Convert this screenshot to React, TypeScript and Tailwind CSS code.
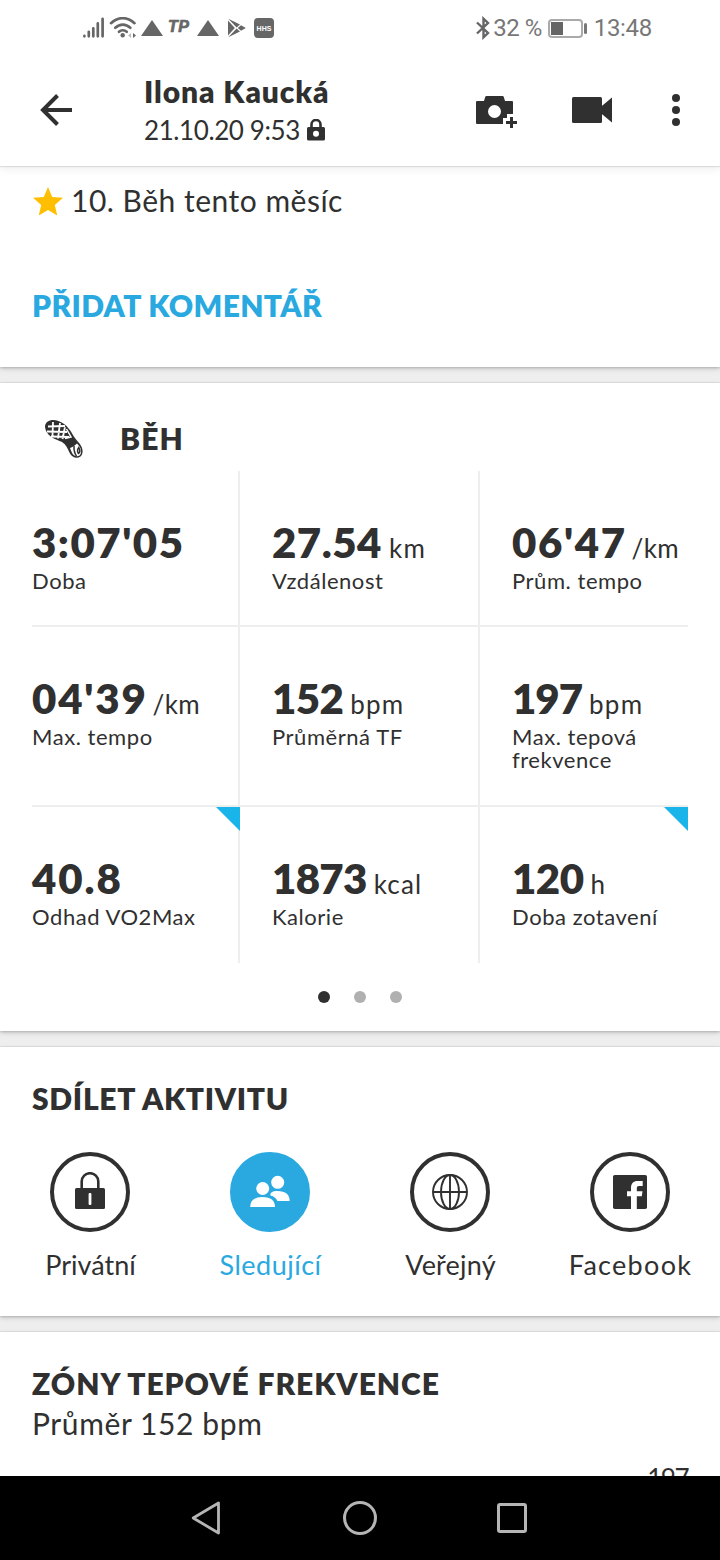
import { ReactNode } from "react"
import clsx from "clsx"

interface Metric {
  value: string
  unit?: string
  label: string
  flagged?: boolean
  spacing: string
}

const metrics: Metric[] = [
  { value: "3:07'05", label: "Doba", spacing: "tracking-[1.5px]" },
  { value: "27.54", unit: "km", label: "Vzdálenost", spacing: "tracking-[0.5px]" },
  { value: "06'47", unit: "/km", label: "Prům. tempo", spacing: "tracking-[1.6px]" },
  { value: "04'39", unit: "/km", label: "Max. tempo", spacing: "tracking-[1.8px]" },
  { value: "152", unit: "bpm", label: "Průměrná TF", spacing: "tracking-[-0.6px]" },
  { value: "197", unit: "bpm", label: "Max. tepová frekvence", spacing: "tracking-[-1px]" },
  { value: "40.8", label: "Odhad VO2Max", flagged: true, spacing: "tracking-[1.9px]" },
  { value: "1873", unit: "kcal", label: "Kalorie", spacing: "tracking-[-0.7px]" },
  { value: "120", unit: "h", label: "Doba zotavení", flagged: true, spacing: "tracking-[-0.5px]" },
]

function WarningTriangle({ className }: { className: string }) {
  return (
    <svg width="22" height="16" viewBox="0 0 22 16" fill="currentColor" className={className}>
      <path d="M11 0 22 16H0z" />
    </svg>
  )
}

function StatusBar() {
  return (
    <div className="flex h-14 items-center justify-between pl-[82px] pr-[68px] text-[#666]">
      <div className="flex items-center">
        <svg width="24" height="22" viewBox="0 0 24 22" stroke="currentColor" strokeWidth="2.7" strokeLinecap="round">
          <path d="M2.4 19.3v-.4M6.8 19.3v-4.5M11.3 19.3v-8M15.8 19.3V6.4M20.6 19.3V1.8" />
        </svg>
        <svg width="28" height="22" viewBox="0 0 28 22" className="ml-[3px]" fill="none" stroke="currentColor">
          <path
            d="M2 6.2C9-.6 18.5-.6 25.5 6.2M6.3 10.8c4.5-4.2 10.5-4.2 15 0M10 14.8c2.2-2 5.5-2 7.7 0"
            strokeWidth="2.6"
            strokeLinecap="round"
          />
          <circle cx="13.7" cy="18.3" r="2.2" fill="currentColor" stroke="none" />
          <path d="M24 16v5l3-2.5z" fill="currentColor" stroke="none" />
          <path d="M22 16v5l-3-2.5z" fill="#bbb" stroke="none" />
        </svg>
        <WarningTriangle className="ml-1" />
        <span className="ml-[5px] flex w-6 items-center pb-[2px] font-['Liberation_Sans'] text-[16px] font-bold italic leading-none tracking-[0.6px] [-webkit-text-stroke:0.7px]">
          TP
        </span>
        <WarningTriangle className="ml-[5px]" />
        <svg width="18" height="20" viewBox="0 0 18 20" fill="currentColor" className="ml-[9px]">
          <path d="M0 2.5 6.8 10 0 17.5zM.3.8 12 6.6 8.6 9.4zM.3 19.2 12 13.4 8.6 10.6zM13 7.3 17.8 10 13 12.7 9.8 10z" />
        </svg>
        <div className="ml-2 flex h-5 w-5 items-center justify-center rounded-[4px] bg-[#666] font-['Liberation_Sans'] text-[7px] font-bold leading-none text-white">
          HHS
        </div>
      </div>
      <div className="flex items-center font-[Roboto] text-[24px] leading-none text-[#777]">
        <svg width="14" height="24" viewBox="0 0 14 24" fill="none" stroke="#666" strokeWidth="2.4">
          <path d="M1 6.5 12 17 7.5 21.3V2.7L12 7 1 17.5" />
        </svg>
        <span className="ml-[3px] tracking-[-0.5px]">32 %</span>
        <div className="ml-[6px] flex h-[19px] w-[35px] items-center rounded-[4px] border-2 border-[#aaa] pl-px">
          <div className="h-[13px] w-3 bg-[#666]" />
        </div>
        <div className="ml-[1px] mr-[7px] h-[11px] w-[3px] rounded-sm bg-[#777]" />
        <span className="tracking-[-0.3px]">13:48</span>
      </div>
    </div>
  )
}

function Header() {
  return (
    <header className="relative z-10 flex h-[110px] items-center bg-white pb-[2px] pl-10 shadow-[0_1px_1px_rgba(0,0,0,0.1),0_4px_8px_rgba(0,0,0,0.06)] [clip-path:inset(0_0_-14px_0)]">
      <svg width="32" height="32" viewBox="0 0 32 32" fill="none" stroke="currentColor" strokeWidth="4">
        <path d="M32 16H3M17.5 1.5 3 16l14.5 14.5" />
      </svg>
      <div className="ml-[72px] w-[332px]">
        <div className="text-[30px] font-extrabold leading-9 tracking-[0.9px]">Ilona Kaucká</div>
        <div className="mt-[3px] flex items-center text-[26px] leading-9">
          <span className="tracking-[-0.4px]">21.10.20 9:53</span>
          <svg width="18" height="22" viewBox="0 0 18 22" className="ml-[7px]">
            <path d="M4.5 9V5.5a4.5 4.5 0 0 1 9 0V9" fill="none" stroke="currentColor" strokeWidth="2.6" />
            <rect y="8" width="18" height="13.5" rx="1.5" fill="currentColor" />
            <circle cx="9" cy="14.7" r="3" fill="white" />
          </svg>
        </div>
      </div>
      <svg width="42" height="34" viewBox="0 0 42 34" fill="currentColor" className="mt-[5px]">
        <path
          fillRule="evenodd"
          d="M10.5 0h16q1 0 1.3 1L29 5h7q1 0 1 1v12h-6v4h-4v6H1q-1 0-1-1V6q0-1 1-1h7l1.200-4Q9.500 0 10.500 0zM18.500 9a6.500 6.500 0 1 0 0 13 6.500 6.500 0 0 0 0-13z"
        />
        <path d="M34 21h3v4h4v3h-4v4h-3v-4h-4v-3h4z" />
      </svg>
      <svg width="40" height="26" viewBox="0 0 40 26" fill="currentColor" className="ml-[54px]">
        <rect width="30" height="26" rx="1.5" />
        <path d="M28 10.5 40 .5v25L28 15.500z" />
      </svg>
      <svg width="8" height="32" viewBox="0 0 8 32" fill="currentColor" className="ml-[60px]">
        <circle cx="4" cy="4" r="4" />
        <circle cx="4" cy="16" r="4" />
        <circle cx="4" cy="28" r="4" />
      </svg>
    </header>
  )
}

function Card({ children, className }: { children: ReactNode; className?: string }) {
  return (
    <section
      className={clsx(
        "shrink-0 bg-white shadow-[0_-1px_0_rgba(0,0,0,0.05),0_1px_2px_rgba(0,0,0,0.16),0_2px_5px_rgba(0,0,0,0.14)]",
        className
      )}
    >
      {children}
    </section>
  )
}

function ShoeSole() {
  return (
    <svg width="40" height="40" viewBox="0 0 40 40" className="ml-3 mt-[2px]">
      <path
        d="M1 8C1 3 5 .8 10 1c8 .8 14 6.5 17.5 12.5 2.5 4.5 5 7.5 8 11 4 5 4 10.5 1 13-3.5 2.5-8.5 1-10.5-3-2.5-5-3.5-8.5-8-11.500C10 20 2 16.500 1 8z"
        fill="currentColor"
      />
      <path
        d="M4 7.500 21 7M3 12.500l20 .5M7 17.500l18 .5M9 3 8.500 17M16 4 14 19.500M21 8 18.500 20"
        fill="none"
        stroke="white"
        strokeWidth="1.8"
      />
      <path d="M22.500 10l4.500 8-6 1.500" fill="none" stroke="white" strokeWidth="1.500" />
      <path
        d="M26 29c2.500-1 4.500-2.500 7-4.500 4 4 5.500 8.500 2.800 11.800-2.300 1.700-5.800 1-7.300-1.500-1-1.800-1.800-3.800-2.500-5.800z"
        fill="white"
      />
      <path
        d="M30 27c-.2 4 .3 7 2.500 10M34.800 28.500c1.300 2.500 1.200 5-.3 6-1.200-1.700-1.200-4 .3-6z"
        fill="none"
        stroke="currentColor"
        strokeWidth="1.500"
      />
    </svg>
  )
}

function MetricCell({ metric, index }: { metric: Metric; index: number }) {
  return (
    <div
      className={clsx(
        "relative border-[#eee] pt-[45px]",
        index % 3 !== 0 && "pl-8",
        index % 3 !== 2 && "border-r-2",
        index < 6 && "border-b-2"
      )}
    >
      {metric.flagged && (
        <svg
          width="24"
          height="24"
          viewBox="0 0 24 24"
          className={clsx("absolute top-0", index % 3 === 2 ? "right-0" : "-right-0.5")}
        >
          <path d="M0 0h24v24z" fill="#19b4ea" />
        </svg>
      )}
      <div className="flex h-[53px] items-baseline whitespace-nowrap leading-[53px]">
        <span className={clsx("text-[42px] font-extrabold", metric.spacing)}>{metric.value}</span>
        {metric.unit && (
          <span
            className={clsx("text-[26px]", metric.unit === "/km" ? "ml-[5px] tracking-[0.3px]" : "ml-[7px] tracking-[1.2px]")}
          >
            {metric.unit}
          </span>
        )}
      </div>
      <div className="text-[22px] leading-[23px] tracking-[0.55px]">{metric.label}</div>
    </div>
  )
}

function ActivityCard() {
  return (
    <Card className="h-[648px] px-8 pt-[35px]">
      <div className="flex h-10 items-center">
        <ShoeSole />
        <h2 className="ml-9 text-[30px] font-extrabold leading-10 tracking-[1.1px]">BĚH</h2>
      </div>
      <div className="mt-[13px] grid grid-cols-[208px_240px_208px] grid-rows-[156px_180px_156px]">
        {metrics.map((metric, i) => (
          <MetricCell key={metric.label} metric={metric} index={i} />
        ))}
      </div>
      <div className="mt-7 flex justify-center gap-6">
        <span className="h-3 w-3 rounded-full bg-[#303030]" />
        <span className="h-3 w-3 rounded-full bg-[#b0b0b0]" />
        <span className="h-3 w-3 rounded-full bg-[#b0b0b0]" />
      </div>
    </Card>
  )
}

function ShareOption({
  label,
  active,
  spacing,
  children,
}: {
  label: string
  active?: boolean
  spacing: string
  children: ReactNode
}) {
  return (
    <div className="flex flex-col items-center">
      <div
        className={clsx(
          "flex h-20 w-20 items-center justify-center rounded-full border-4",
          active ? "border-[#2aa9e0] bg-[#2aa9e0] text-white" : "border-[#303030]"
        )}
      >
        <svg width="40" height="40" viewBox="0 0 40 40" fill="currentColor">
          {children}
        </svg>
      </div>
      <div className={clsx("mt-[13px] pl-px text-[27px] leading-10", spacing, active && "text-[#2aa9e0]")}>{label}</div>
    </div>
  )
}

function ShareCard() {
  return (
    <Card className="mt-4 h-[269px] pt-[31px]">
      <h2 className="px-8 text-[30px] font-extrabold leading-10 tracking-[0.7px]">SDÍLET AKTIVITU</h2>
      <div className="mt-[34px] grid grid-cols-4">
        <ShareOption label="Privátní" spacing="tracking-[0px]">
          <path d="M11.7 17V9.5a8.3 8.3 0 0 1 16.6 0V17" fill="none" stroke="currentColor" strokeWidth="2.6" />
          <rect x="5" y="16" width="30" height="21" rx="1.5" />
          <rect x="18.6" y="21" width="2.8" height="12" rx="1" fill="white" />
        </ShareOption>
        <ShareOption label="Sledující" active spacing="tracking-[0.5px]">
          <circle cx="12.7" cy="16.5" r="6.5" />
          <path d="M.2 35c0-6.5 4-10 12.3-10S25 28.5 25 35z" />
          <circle cx="27.7" cy="10.3" r="6.5" />
          <path d="M20.500 23.500c-.5-2.500 1.500-4.500 7-4.500 8 0 12.200 3.500 12.200 10H27.500c-1.500-3-3.500-4.500-7-5.500z" />
        </ShareOption>
        <ShareOption label="Veřejný" spacing="tracking-[0.2px]">
          <g fill="none" stroke="currentColor" strokeWidth="1.9">
            <circle cx="20" cy="20" r="17" />
            <ellipse cx="20" cy="20" rx="9" ry="17" />
            <path d="M20 3v34M3 20h34" />
          </g>
        </ShareOption>
        <ShareOption label="Facebook" spacing="tracking-[1.3px]">
          <rect x="3" y="3" width="34" height="34" rx="1.8" />
          <path
            d="M21 37V24.3h-4v-5h4v-3.500C21 11.500 23.500 9 27.500 9h5.200v5H29c-1.500 0-2.200.8-2.200 2.300v3h5.700l-.7 5h-5V37z"
            fill="white"
          />
        </ShareOption>
      </div>
    </Card>
  )
}

function NavBar() {
  return (
    <nav className="flex h-[84px] shrink-0 items-center bg-black pl-[190px] text-[#b5b5b5]">
      <svg width="32" height="36" viewBox="0 0 32 36" fill="none" stroke="currentColor" strokeWidth="2.8" strokeLinejoin="round">
        <path d="M3.2 18 28.5 3v30z" />
      </svg>
      <div className="ml-[121px] h-[34px] w-[34px] rounded-full border-[3px] border-[#b5b5b5]" />
      <div className="ml-[120px] h-[30px] w-[30px] rounded-[3px] border-[3px] border-[#b5b5b5]" />
    </nav>
  )
}

export default function App() {
  return (
    <div className="flex h-[1560px] w-[720px] flex-col overflow-hidden bg-white font-['Lato','Liberation_Sans',sans-serif] text-[#303030]">
      <StatusBar />
      <Header />
      <main className="flex min-h-0 flex-1 flex-col overflow-hidden bg-[#eee]">
        <Card className="mb-4 h-[201px] px-8 pt-[14px]">
          <div className="flex items-center">
            <svg width="36" height="36" viewBox="0 0 24 24" className="-ml-0.5 mt-1" fill="#ffbf00">
              <path d="M12 17.27 18.18 21l-1.64-7.03L22 9.24l-7.19-.61L12 2 9.19 8.63 2 9.24l5.46 4.73L5.82 21z" />
            </svg>
            <span className="ml-[5px] text-[30px] leading-10 tracking-[0.5px]">10. Běh tento měsíc</span>
          </div>
          <button className="mt-[65px] block text-[30px] font-extrabold leading-10 tracking-[0.35px] text-[#2aa9e0]">
            PŘIDAT KOMENTÁŘ
          </button>
        </Card>
        <ActivityCard />
        <ShareCard />
        <Card className="mt-4 h-[200px] px-8 pt-[31px]">
          <h2 className="text-[30px] font-extrabold leading-10 tracking-[0.95px]">ZÓNY TEPOVÉ FREKVENCE</h2>
          <p className="text-[30px] leading-10 tracking-[0.6px]">Průměr 152 bpm</p>
          <div className="mt-[15px] text-right text-[26px] leading-10 tracking-[-1.5px]">197</div>
        </Card>
      </main>
      <NavBar />
    </div>
  )
}
